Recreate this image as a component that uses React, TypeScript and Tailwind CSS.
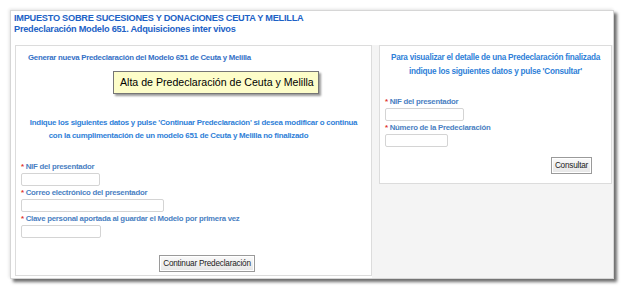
const sans = { fontFamily: '"Liberation Sans", Arial, sans-serif' };

function Label({ text }: { text: string }) {
  return (
    <div className="whitespace-nowrap text-[7.8px] font-bold leading-[13px] tracking-[-0.25px] text-[#4a7fc2]">
      <span className="text-[#e0352b]">*</span> {text}
    </div>
  );
}

function Field({ width }: { width: string }) {
  return (
    <input
      className={`block h-[13px] rounded-[2px] border border-[#d4d4d4] bg-white ${width}`}
    />
  );
}

function Button({ text, width }: { text: string; width: string }) {
  return (
    <button
      className={`h-[17px] whitespace-nowrap border border-[#9a9a9a] bg-gradient-to-b from-[#fafafa] to-[#e6e6e6] text-[8.2px] leading-[15px] tracking-[-0.2px] text-[#222] shadow-[inset_0_0_0_1px_#fff] ${width}`}
    >
      {text}
    </button>
  );
}

export default function App() {
  return (
    <div className="h-[290px] w-[624px] bg-white pt-[10px]" style={sans}>
      <div className="ml-[10px] h-[269px] w-[604px] border border-[#d6d6d6] bg-white shadow-[3px_3px_3px_#6e6e6e,-1px_-1px_3px_#e4e4e4]">
        <div className="h-[34px] whitespace-nowrap pl-[3px] pt-[2px] text-[9.2px] font-bold leading-[11px] tracking-[-0.25px] text-[#1d62c6]">
          <div>IMPUESTO SOBRE SUCESIONES Y DONACIONES CEUTA Y MELILLA</div>
          <div>Predeclaración Modelo 651. Adquisiciones inter vivos</div>
        </div>

        <div className="flex h-[233px]">
          <div className="bg-white pl-[4px]">
            <div className="relative h-[231px] w-[357px] border border-[#dcdcdc] bg-white">
              <div className="whitespace-nowrap pl-[12px] pt-[6px] text-[7.8px] font-bold leading-[12px] tracking-[-0.25px] text-[#3470c6]">
                Generar nueva Predeclaración del Modelo 651 de Ceuta y Melilla
              </div>

              <div className="absolute left-[97px] top-[25px] flex h-[23px] w-[206px] items-center whitespace-nowrap border border-[#767676] bg-[#fdfdc9] pl-[6px] text-[10.6px] text-black shadow-[2px_2px_2px_#9a9a9a]">
                Alta de Predeclaración de Ceuta y Melilla
              </div>

              <div className="mt-[52px] text-[7.9px] font-bold leading-[13px] tracking-[-0.25px] text-[#2f7fd8]">
                <div className="whitespace-nowrap text-center">
                  Indique los siguientes datos y pulse 'Continuar Predeclaración' si desea modificar o continua
                </div>
                <div className="whitespace-nowrap pr-[30px] text-center">
                  con la cumplimentación de un modelo 651 de Ceuta y Melilla no finalizado
                </div>
              </div>

              <div className="mt-[18px] pl-[5px]">
                <Label text="NIF del presentador" />
                <Field width="w-[79px]" />
                <Label text="Correo electrónico del presentador" />
                <Field width="w-[143px]" />
                <Label text="Clave personal aportada al guardar el Modelo por primera vez" />
                <Field width="w-[80px]" />
              </div>

              <div className="mt-[11px] pl-[143px]">
                <Button text="Continuar Predeclaración" width="w-[96px]" />
              </div>
            </div>
          </div>

          <div className="flex-1 bg-[#f4f4f4] pl-[7px]">
            <div className="h-[139px] w-[233px] border border-[#dcdcdc] bg-white">
              <div className="whitespace-nowrap pt-[5px] text-center text-[8.2px] font-bold leading-[14px] tracking-[-0.25px] text-[#2f7fd8]">
                <div>Para visualizar el detalle de una Predeclaración finalizada</div>
                <div>indique los siguientes datos y pulse 'Consultar'</div>
              </div>

              <div className="mt-[16px] pl-[5px]">
                <Label text="NIF del presentador" />
                <Field width="w-[79px]" />
                <Label text="Número de la Predeclaración" />
                <Field width="w-[63px]" />
              </div>

              <div className="mt-[10px] flex justify-end pr-[19px]">
                <Button text="Consultar" width="w-[41px]" />
              </div>
            </div>
          </div>
        </div>
      </div>
    </div>
  );
}
